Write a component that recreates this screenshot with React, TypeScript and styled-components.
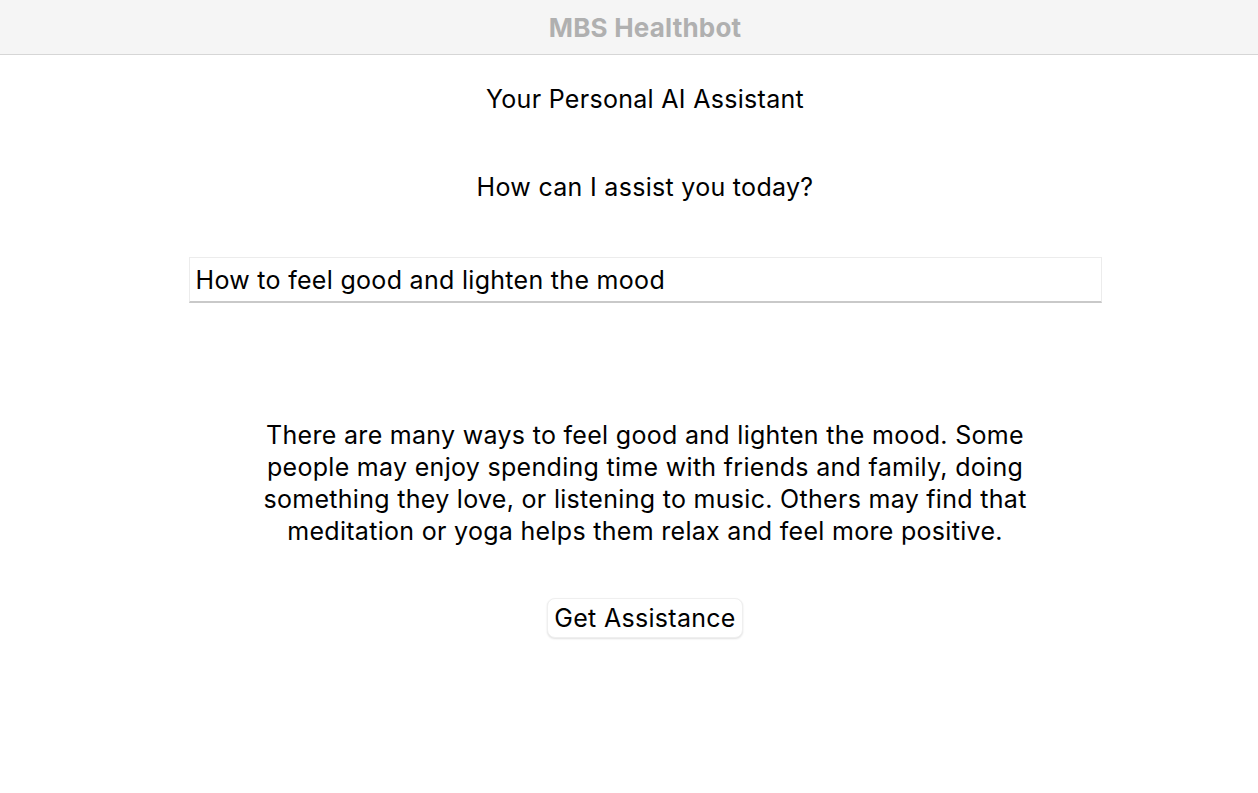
import React, { useState } from 'react';
import styled, { createGlobalStyle } from 'styled-components';

const GlobalStyle = createGlobalStyle`
    html, body {
        margin: 0;
        padding: 0;
        background: #ffffff;
        font-family: Inter, "Noto Sans", "Liberation Sans", sans-serif;
        color: #000;
    }
`;

const Window = styled.div`
    display: flex;
    flex-direction: column;
    min-height: 793px;
    background: #ffffff;
`;

const TitleBar = styled.header`
    height: 54px;
    display: flex;
    align-items: center;
    justify-content: center;
    padding-left: 32px;
    background: #f5f5f5;
    border-bottom: 1px solid #d6d6d6;
`;

const WindowTitle = styled.h1`
    margin: 0;
    font-size: 26px;
    font-weight: 700;
    color: #b0b0b0;
    letter-spacing: 0.2px;
`;

const Content = styled.main`
    display: flex;
    flex-direction: column;
    align-items: center;
    padding-left: 32px;
    font-size: 25px;
    letter-spacing: 0.3px;
`;

const Heading = styled.p<{ $top: number }>`
    margin: ${p => p.$top}px 0 0;
    line-height: 32px;
`;

const PromptInput = styled.input`
    box-sizing: border-box;
    margin-top: 54px;
    width: 913px;
    height: 46px;
    padding: 0 6px;
    font-family: inherit;
    font-size: 25px;
    letter-spacing: 0.3px;
    color: #000;
    background: #fff;
    border: 1px solid #ececec;
    border-bottom: 2px solid #c9c9c9;
    outline: none;
`;

const Answer = styled.p`
    margin: 116px 0 0;
    max-width: 780px;
    line-height: 32px;
    text-align: center;
`;

const AssistButton = styled.button`
    margin-top: 51px;
    height: 40px;
    padding: 0 6px;
    font-family: inherit;
    font-size: 25px;
    letter-spacing: 0.3px;
    color: #000;
    background: #fff;
    border: 1px solid #efefef;
    border-radius: 8px;
    box-shadow: 0 1px 2px rgba(0, 0, 0, 0.12);
    cursor: pointer;
`;

const App: React.FC = () => {
    const [prompt, setPrompt] = useState('How to feel good and lighten the mood');
    const answer =
        'There are many ways to feel good and lighten the mood. Some people may enjoy spending time with friends and family, doing something they love, or listening to music. Others may find that meditation or yoga helps them relax and feel more positive.';

    return (
        <Window>
            <GlobalStyle />
            <TitleBar>
                <WindowTitle>MBS Healthbot</WindowTitle>
            </TitleBar>
            <Content>
                <Heading $top={28}>Your Personal AI Assistant</Heading>
                <Heading $top={56}>How can I assist you today?</Heading>
                <PromptInput value={prompt} onChange={e => setPrompt(e.target.value)} />
                <Answer>{answer}</Answer>
                <AssistButton>Get Assistance</AssistButton>
            </Content>
        </Window>
    );
};

export default App;
